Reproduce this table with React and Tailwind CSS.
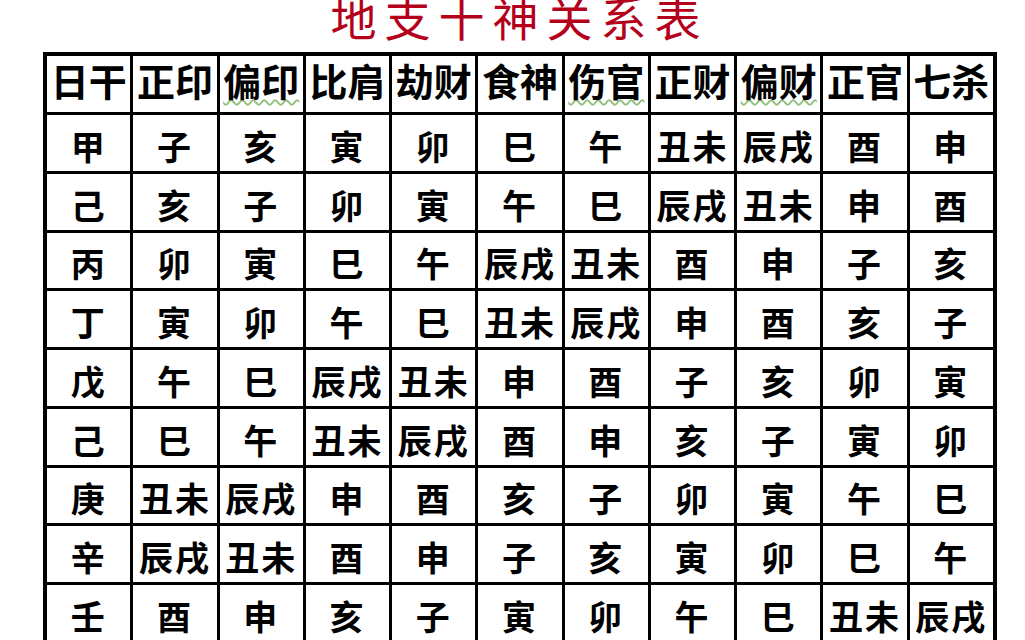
import React from 'react';

const header = ['日干', '正印', '偏印', '比肩', '劫财', '食神', '伤官', '正财', '偏财', '正官', '七杀'];
// header cells that carry the green spell-check squiggle
const squiggled = ['偏印', '伤官', '偏财'];

const rows = [
  ['甲', '子', '亥', '寅', '卯', '巳', '午', '丑未', '辰戌', '酉', '申'],
  ['己', '亥', '子', '卯', '寅', '午', '巳', '辰戌', '丑未', '申', '酉'],
  ['丙', '卯', '寅', '巳', '午', '辰戌', '丑未', '酉', '申', '子', '亥'],
  ['丁', '寅', '卯', '午', '巳', '丑未', '辰戌', '申', '酉', '亥', '子'],
  ['戊', '午', '巳', '辰戌', '丑未', '申', '酉', '子', '亥', '卯', '寅'],
  ['己', '巳', '午', '丑未', '辰戌', '酉', '申', '亥', '子', '寅', '卯'],
  ['庚', '丑未', '辰戌', '申', '酉', '亥', '子', '卯', '寅', '午', '巳'],
  ['辛', '辰戌', '丑未', '酉', '申', '子', '亥', '寅', '卯', '巳', '午'],
  ['壬', '酉', '申', '亥', '子', '寅', '卯', '午', '巳', '丑未', '辰戌'],
];

const cjk = { fontFamily: '"Noto Sans CJK SC", "Noto Sans", sans-serif' };

export default function App() {
  return (
    <div className="w-[1025px] h-[640px] overflow-hidden bg-white" style={cjk}>
      {/* Title (top is cropped in the source shot) */}
      <div className="h-[52px] flex items-end justify-center pl-[14px] pb-[13px]">
        <h1 className="text-[46px] leading-none font-normal tracking-[8px] text-[#b5001c]">地支十神关系表</h1>
      </div>

      {/* Table */}
      <div className="ml-[43px] w-[954px] bg-black p-[4px] grid grid-cols-11 gap-[3px]">
        {header.map((h) => (
          <div key={h} className="h-[56px] bg-white flex items-center justify-center pb-[8px]">
            <span
              className={
                'text-[38px] leading-none font-bold text-black ' +
                (squiggled.includes(h) ? 'underline decoration-wavy decoration-[#8fc07a] decoration-[1.5px] underline-offset-[3px]' : '')
              }
            >
              {h}
            </span>
          </div>
        ))}
        {rows.map((r, i) =>
          r.map((c, j) => (
            <div key={i + '-' + j} className="h-[55.75px] bg-white flex items-center justify-center pt-[6px]">
              <span className="text-[34px] leading-none font-bold text-black tracking-[2px]">{c}</span>
            </div>
          ))
        )}
      </div>
    </div>
  );
}
